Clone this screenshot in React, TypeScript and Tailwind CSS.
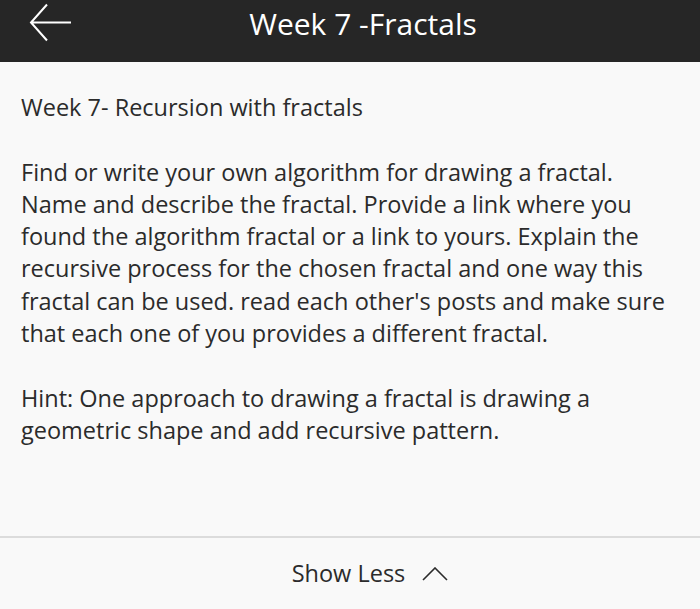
import React from "react";

export default function App() {
  return (
    <div className="w-[700px] h-[609px] bg-[#f9f9f9] flex flex-col overflow-hidden" style={{ fontFamily: '"Open Sans", sans-serif' }}>
      <div className="h-[62px] bg-[#262626] flex items-center relative shrink-0">
        <svg className="absolute left-[29px] top-[3px]" width="44" height="40" viewBox="0 0 44 40" fill="none" stroke="white" strokeWidth="2">
          <path d="M2 19.5 H42 M18 1.5 L2 19.5 L18 37.5" />
        </svg>
        <div className="w-full text-center text-white text-[30px] leading-none pl-[26px] pb-[14px]">Week 7 -Fractals</div>
      </div>
      <div className="flex-1 pl-[21px] pr-[21px] pt-[29px] text-[#2b2b2b] text-[23.5px] leading-[32.3px]">
        <p>Week 7- Recursion with fractals</p>
        <br />
        <p>Find or write your own algorithm for drawing a fractal. Name and describe the fractal. Provide a link where you found the algorithm fractal or a link to yours. Explain the recursive process for the chosen fractal and one way this fractal can be used. read each other's posts and make sure that each one of you provides a different fractal.</p>
        <br />
        <p>Hint: One approach to drawing a fractal is drawing a geometric shape and add recursive pattern.</p>
      </div>
      <div className="h-[2px] bg-[#dcdcdc] shrink-0" />
      <div className="h-[71px] flex items-center justify-center gap-[17px] shrink-0 pl-[40px] text-[#2b2b2b] text-[23.5px]">
        <span>Show Less</span>
        <svg width="26" height="14" viewBox="0 0 26 14" fill="none" stroke="#2b2b2b" strokeWidth="1.6">
          <path d="M1 13 L13 1 L25 13" />
        </svg>
      </div>
    </div>
  );
}
